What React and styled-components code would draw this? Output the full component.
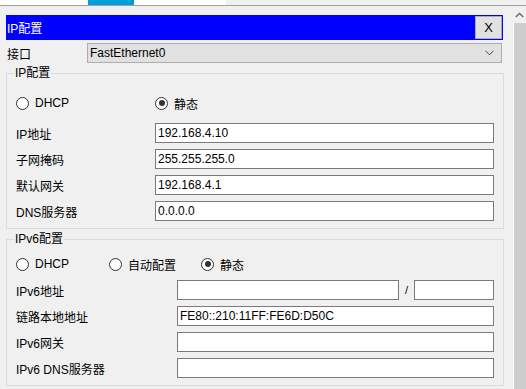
import React from 'react';
import styled, { createGlobalStyle } from 'styled-components';

const GlobalStyle = createGlobalStyle`
  html, body {
    margin: 0;
    padding: 0;
    background: #f0f0f0;
    overflow: hidden;
  }
  body {
    font-family: "Liberation Sans", "Noto Sans CJK SC", sans-serif;
    font-size: 12px;
    color: #000;
  }
`;

const Page = styled.div`
  width: 526px;
  height: 389px;
  display: flex;
  flex-direction: column;
  background: #f0f0f0;
`;

const TabStrip = styled.div`
  display: flex;
  height: 5px;
  border-bottom: 1px solid #a0a0a0;
`;

const TabPiece = styled.div`
  width: ${p => p.w}px;
  flex: ${p => (p.w ? 'none' : '1')};
  background: ${p => p.color};
`;

const Main = styled.div`
  flex: 1;
  display: flex;
  min-height: 0;
`;

const Content = styled.div`
  width: 513px;
  padding: 9px 0 0 6px;
  box-sizing: border-box;
  display: flex;
  flex-direction: column;
`;

const Scrollbar = styled.div`
  width: 13px;
  display: flex;
  flex-direction: column;
`;

const ScrollArrow = styled.div`
  height: 17px;
  display: flex;
  align-items: center;
  justify-content: center;
  background: #f0f0f0;
`;

const ScrollThumb = styled.div`
  flex: 1;
  background: #cdcdcd;
  border-left: 1px solid #ffffff;
`;

const TitleBar = styled.div`
  width: 497px;
  height: 25px;
  box-sizing: border-box;
  background: #0000ff;
  display: flex;
  align-items: center;
  justify-content: space-between;
  padding: 0 1px 0 1px;
`;

const TitleText = styled.span`
  color: #fff;
  font-size: 12px;
`;

const CloseButton = styled.button`
  width: 27px;
  height: 23px;
  box-sizing: border-box;
  border: 1px solid #adadad;
  background: #e1e1e1;
  font-family: "Liberation Sans", sans-serif;
  font-size: 13px;
  color: #000;
  padding: 0;
`;

const InterfaceRow = styled.div`
  display: grid;
  grid-template-columns: 81px 415px;
  align-items: center;
  margin-top: 3px;
  height: 20px;
`;

const Label = styled.span`
  padding-left: ${p => p.indent || 0}px;
  white-space: nowrap;
`;

const Select = styled.div`
  height: 20px;
  box-sizing: border-box;
  border: 1px solid #adadad;
  background: #e1e1e1;
  display: flex;
  align-items: center;
  justify-content: space-between;
  padding: 0 7px 0 2px;
`;

const Group = styled.fieldset`
  width: 498px;
  box-sizing: border-box;
  margin: ${p => p.top}px 0 0 0;
  padding: ${p => p.padTop}px 9px 7px 9px;
  border: 1px solid #dcdcdc;
  min-width: 0;
`;

const Legend = styled.legend`
  margin-left: -2px;
  padding: 0 1px;
  line-height: 14px;
  font-size: 12px;
`;

const Rows = styled.div`
  display: flex;
  flex-direction: column;
  gap: 6px;
`;

const FieldRow = styled.div`
  display: grid;
  grid-template-columns: ${p => p.labelWidth}px 1fr;
  align-items: center;
  height: 20px;
`;

const RadioRow = styled.div`
  display: flex;
  align-items: center;
  height: 20px;
  margin-bottom: ${p => p.after}px;
`;

const RadioItem = styled.label`
  display: flex;
  align-items: center;
  gap: 6px;
  width: ${p => (p.w ? `${p.w}px` : 'auto')};
`;

const RadioCircle = styled.span`
  width: 13px;
  height: 13px;
  box-sizing: border-box;
  border: 1px solid #333;
  border-radius: 50%;
  background: #fff;
  display: flex;
  align-items: center;
  justify-content: center;

  &::after {
    content: '';
    width: 6px;
    height: 6px;
    border-radius: 50%;
    background: ${p => (p.checked ? '#333' : 'transparent')};
  }
`;

const TextBox = styled.div`
  height: 20px;
  box-sizing: border-box;
  border: 1px solid #7a7a7a;
  background: #fff;
  padding-left: 2px;
  display: flex;
  align-items: center;
  white-space: nowrap;
  overflow: hidden;
`;

const SplitInput = styled.div`
  display: grid;
  grid-template-columns: 222px 15px 80px;
  align-items: center;
`;

const Slash = styled.span`
  text-align: center;
  font-size: 11px;
`;

const Radio = ({ label, checked, w }) => (
  <RadioItem w={w}>
    <RadioCircle checked={checked} />
    <span>{label}</span>
  </RadioItem>
);

const ipv4Fields = [
  ['IP地址', '192.168.4.10'],
  ['子网掩码', '255.255.255.0'],
  ['默认网关', '192.168.4.1'],
  ['DNS服务器', '0.0.0.0'],
];

const ipv6Fields = [
  ['链路本地地址', 'FE80::210:11FF:FE6D:D50C'],
  ['IPv6网关', ''],
  ['IPv6 DNS服务器', ''],
];

const App = () => (
  <Page>
    <GlobalStyle />
    <TabStrip>
      <TabPiece w={88} color="#ffffff" />
      <TabPiece w={46} color="#00a0d6" />
      <TabPiece w={92} color="#ffffff" />
      <TabPiece color="#f0f0f0" />
    </TabStrip>
    <Main>
      <Content>
        <TitleBar>
          <TitleText>IP配置</TitleText>
          <CloseButton type="button">X</CloseButton>
        </TitleBar>

        <InterfaceRow>
          <Label indent={1}>接口</Label>
          <Select>
            <span>FastEthernet0</span>
            <svg width="9" height="6" viewBox="0 0 9 6">
              <path d="M0.5 0.8 L4.5 4.8 L8.5 0.8" fill="none" stroke="#444" strokeWidth="1" />
            </svg>
          </Select>
        </InterfaceRow>

        <Group top={3} padTop={13}>
          <Legend>IP配置</Legend>
          <RadioRow after={10}>
            <Radio label="DHCP" w={139} />
            <Radio label="静态" checked />
          </RadioRow>
          <Rows>
            {ipv4Fields.map(([label, value]) => (
              <FieldRow key={label} labelWidth={139}>
                <Label>{label}</Label>
                <TextBox>{value}</TextBox>
              </FieldRow>
            ))}
          </Rows>
        </Group>

        <Group top={3} padTop={8}>
          <Legend>IPv6配置</Legend>
          <RadioRow after={6}>
            <Radio label="DHCP" w={93} />
            <Radio label="自动配置" w={92} />
            <Radio label="静态" checked />
          </RadioRow>
          <Rows>
            <FieldRow labelWidth={161}>
              <Label>IPv6地址</Label>
              <SplitInput>
                <TextBox />
                <Slash>/</Slash>
                <TextBox />
              </SplitInput>
            </FieldRow>
            {ipv6Fields.map(([label, value]) => (
              <FieldRow key={label} labelWidth={161}>
                <Label>{label}</Label>
                <TextBox>{value}</TextBox>
              </FieldRow>
            ))}
          </Rows>
        </Group>
      </Content>
      <Scrollbar>
        <ScrollArrow>
          <svg width="9" height="6" viewBox="0 0 9 6">
            <path d="M0.8 5 L4.5 1.3 L8.2 5" fill="none" stroke="#606060" strokeWidth="1.3" />
          </svg>
        </ScrollArrow>
        <ScrollThumb />
      </Scrollbar>
    </Main>
  </Page>
);

export default App;
